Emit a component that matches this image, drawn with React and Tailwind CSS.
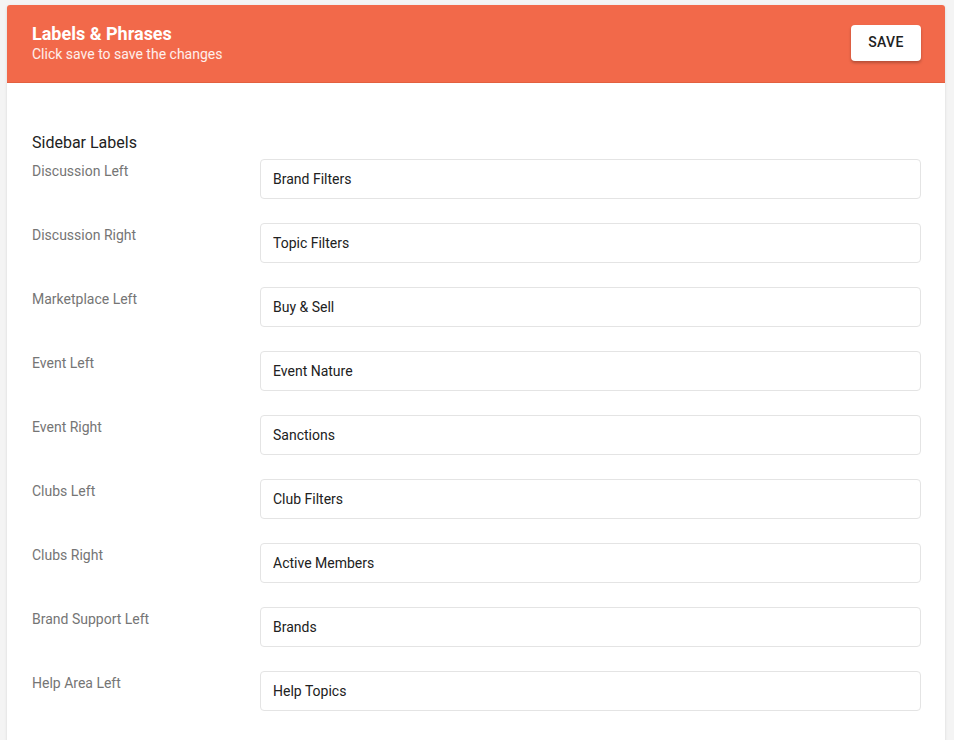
import { useState } from 'react';

const SIDEBAR_LABELS = [
  { key: 'discussionLeft', label: 'Discussion Left', value: 'Brand Filters' },
  { key: 'discussionRight', label: 'Discussion Right', value: 'Topic Filters' },
  { key: 'marketplaceLeft', label: 'Marketplace Left', value: 'Buy & Sell' },
  { key: 'eventLeft', label: 'Event Left', value: 'Event Nature' },
  { key: 'eventRight', label: 'Event Right', value: 'Sanctions' },
  { key: 'clubsLeft', label: 'Clubs Left', value: 'Club Filters' },
  { key: 'clubsRight', label: 'Clubs Right', value: 'Active Members' },
  { key: 'brandSupportLeft', label: 'Brand Support Left', value: 'Brands' },
  { key: 'helpAreaLeft', label: 'Help Area Left', value: 'Help Topics' },
];

function LabelRow({ label, name, value, onChange }) {
  return (
    <div className="flex items-start">
      <label htmlFor={name} className="mt-[2px] w-[228px] shrink-0 text-[14px] leading-5 text-[#757575]">
        {label}
      </label>
      <input
        id={name}
        name={name}
        value={value}
        onChange={onChange}
        className="h-10 flex-1 rounded-[4px] border border-[#e4e4e4] bg-white px-3 text-[14px] text-[#212121] focus:border-[#f2694a] focus:outline-none"
      />
    </div>
  );
}

export default function App() {
  const [form, setForm] = useState(
    Object.fromEntries(SIDEBAR_LABELS.map((f) => [f.key, f.value]))
  );

  const handleChange = (e) => {
    setForm((prev) => ({ ...prev, [e.target.name]: e.target.value }));
  };

  return (
    <div className="min-h-screen overflow-hidden bg-[#f4f4f4] pt-[5px] font-['Roboto',sans-serif]">
      <div className="ml-[7px] w-[938px] rounded-t-[3px] bg-white shadow-[0_1px_3px_rgba(0,0,0,0.12)]">
        <div className="flex h-[78px] items-center justify-between rounded-t-[3px] border-b border-[#e3603f] bg-[#f2694a] pl-[25px] pr-[24px]">
          <div className="-mt-[1px]">
            <h1 className="text-[18px] font-bold leading-[22px] text-white">Labels &amp; Phrases</h1>
            <p className="text-[14px] leading-[19px] text-white/90">Click save to save the changes</p>
          </div>
          <button
            type="button"
            className="-mt-[2px] h-9 w-[70px] rounded-[4px] bg-white text-[14px] font-medium tracking-[0.02em] text-[#212121] shadow-[0_2px_3px_rgba(0,0,0,0.25)]"
          >
            SAVE
          </button>
        </div>

        <div className="px-[25px] pr-[24px] pt-[48px]">
          <h2 className="mb-1 text-[16px] leading-6 text-[#212121]">Sidebar Labels</h2>
          <div className="flex flex-col gap-6">
            {SIDEBAR_LABELS.map((f) => (
              <LabelRow key={f.key} name={f.key} label={f.label} value={form[f.key]} onChange={handleChange} />
            ))}
          </div>
          <h2 className="mb-1 mt-[25px] text-[16px] leading-6 text-[#212121]">Page Header Labels</h2>
        </div>
      </div>
    </div>
  );
}
